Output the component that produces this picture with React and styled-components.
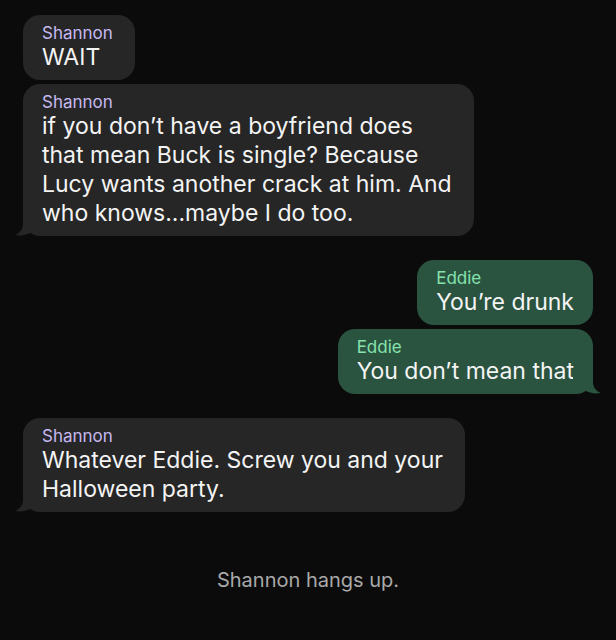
import styled, { createGlobalStyle } from 'styled-components'

const GlobalStyle = createGlobalStyle`
  html, body {
    margin: 0;
    padding: 0;
    background: #0b0b0b;
  }
  body {
    font-family: Inter, "Noto Sans", "Liberation Sans", sans-serif;
    -webkit-font-smoothing: antialiased;
  }
`

const Screen = styled.div`
  width: 616px;
  height: 640px;
  background: #0b0b0b;
  box-sizing: border-box;
  padding: 15px 23px 0 23px;
  display: flex;
  flex-direction: column;
  overflow: hidden;
`

const Group = styled.div`
  display: flex;
  flex-direction: column;
  align-items: ${({ side }) => (side === 'right' ? 'flex-end' : 'flex-start')};
  gap: 4px;
  margin-bottom: 24px;
`

const BubbleBox = styled.div`
  position: relative;
  background: ${({ side }) => (side === 'right' ? '#2a5340' : '#262626')};
  border-radius: 17px;
  padding: 8px ${({ side }) => (side === 'right' ? '19px' : '22px')} 8px 19px;
  color: #f4f4f4;
`

const Name = styled.div`
  font-size: 17px;
  line-height: 20px;
  color: ${({ side }) => (side === 'right' ? '#86e3ad' : '#c6b9f2')};
`

const Body = styled.div`
  font-size: 23px;
  line-height: 29px;
  white-space: nowrap;
`

const Tail = styled.svg`
  position: absolute;
  bottom: 0;
  width: 28px;
  height: 22px;
  ${({ side }) =>
    side === 'right'
      ? 'right: -8px; transform: scaleX(-1);'
      : 'left: -8px;'}
`

const Notice = styled.div`
  margin-top: 32px;
  text-align: center;
  font-size: 20px;
  color: #a9a9a9;
`

function Bubble({ side = 'left', name, lines, tail }) {
  return (
    <BubbleBox side={side}>
      <Name side={side}>{name}</Name>
      <Body>
        {lines.map((l, i) => (
          <div key={i}>{l}</div>
        ))}
      </Body>
      {tail && (
        <Tail side={side} viewBox="0 0 28 22">
          <path
            d="M8 0 V10 C8 15 5 19 0 21 C6 22 12 21 17 18 C20 20.5 24 22 28 22 V0 Z"
            fill={side === 'right' ? '#2a5340' : '#262626'}
          />
        </Tail>
      )}
    </BubbleBox>
  )
}

export default function App() {
  return (
    <>
      <GlobalStyle />
      <Screen>
        <Group side="left">
          <Bubble name="Shannon" lines={['WAIT']} />
          <Bubble
            name="Shannon"
            tail
            lines={[
              'if you don’t have a boyfriend does',
              'that mean Buck is single? Because',
              'Lucy wants another crack at him. And',
              'who knows...maybe I do too.',
            ]}
          />
        </Group>
        <Group side="right">
          <Bubble side="right" name="Eddie" lines={['You’re drunk']} />
          <Bubble side="right" name="Eddie" tail lines={['You don’t mean that']} />
        </Group>
        <Group side="left">
          <Bubble
            name="Shannon"
            tail
            lines={['Whatever Eddie. Screw you and your', 'Halloween party.']}
          />
        </Group>
        <Notice>Shannon hangs up.</Notice>
      </Screen>
    </>
  )
}
